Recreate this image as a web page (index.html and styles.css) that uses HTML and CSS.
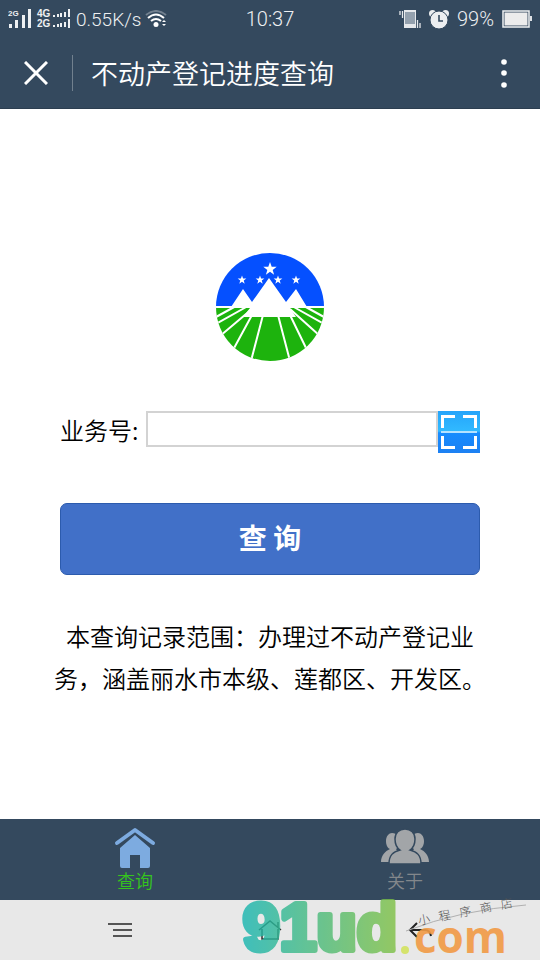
FILE: index.html
```html
<!DOCTYPE html>
<html lang="zh-CN">
<head>
  <meta charset="UTF-8">
  <meta name="viewport" content="width=device-width, initial-scale=1">
  <title>不动产登记进度查询</title>
  <link rel="stylesheet" href="styles.css">
</head>
<body>
  <div class="status-bar">
    <div class="status-left">
      <svg class="signal" width="64" height="20" viewBox="0 0 64 20">
        <g fill="#eef0f2">
          <text x="0" y="7" font-size="8">2G</text>
          <path d="M1 15h3v4h-3zM7 11h3v8h-3zM14 6h3v13h-3zM20 0h3v19h-3z"/>
          <text x="29" y="8" font-size="10">4G</text>
          <text x="29" y="18" font-size="10">2G</text>
          <path d="M45 6h2v2h-2zM49 5h2v3h-2zM52 4h2v4h-2zM56 3h2v5h-2zM60 0h2v8h-2zM45 16h2v2h-2zM49 15h2v3h-2zM52 14h2v4h-2zM56 13h2v5h-2zM60 10h2v9h-2z"/>
        </g>
      </svg>
      <span class="speed">0.55K/s</span>
      <svg width="22" height="18" viewBox="0 0 22 18" fill="none" stroke="#fff" stroke-width="2">
        <path d="M1 5Q11-3 21 5" stroke="#72808f"/>
        <path d="M3 8Q11 1 19 8M6 11Q11 7 16 11"/>
        <circle cx="11" cy="14.500" r="2.500" fill="#fff" stroke="none"/>
        <path d="M17 12l2-2 2 2zM17 14l2 2 2-2z" fill="#fff" stroke="none"/>
      </svg>
    </div>
    <span>10:37</span>
    <div class="status-right">
      <svg class="vibrate" width="22" height="19" viewBox="0 0 22 19">
        <path d="M5 0h12v18H5z" fill="#e6e9ec"/>
        <path d="M6 2h10v12H6z" fill="#94a1ae"/>
        <path d="M1 1v4M3.500 1v7M18.500 10v8M21 13v5" stroke="#e6e9ec" stroke-width="1.300"/>
      </svg>
      <svg class="alarm" width="20" height="19" viewBox="0 0 20 19">
        <circle cx="3.500" cy="3.500" r="3.500" fill="#eceef0"/>
        <circle cx="16.500" cy="3.500" r="3.500" fill="#eceef0"/>
        <circle cx="10" cy="10" r="9" fill="#eceef0" stroke="#34495e"/>
        <path d="M10 5v6h4" fill="none" stroke="#34495e" stroke-width="1.600"/>
      </svg>
      <span class="percent">99%</span>
      <svg width="30" height="18" viewBox="0 0 30 18">
        <path d="M1 1h26v16H1z" fill="none" stroke="#f0f2f4" stroke-width="1.500"/>
        <path d="M2.500 2.500h23v13h-23z" fill="#ececec"/>
        <path d="M28 6h2v5h-2z" fill="#dde1e5"/>
      </svg>
    </div>
  </div>

  <header class="title-bar">
    <button type="button" class="icon-btn" aria-label="关闭">
      <svg width="24" height="24" viewBox="0 0 24 24" stroke="#fff" stroke-width="3">
        <path d="M1 1l22 22M23 1L1 23"/>
      </svg>
    </button>
    <h1>不动产登记进度查询</h1>
    <button type="button" class="icon-btn" aria-label="更多">
      <svg width="6" height="30" viewBox="0 0 6 30" fill="#fff">
        <circle cx="3" cy="4" r="2.800"/><circle cx="3" cy="15" r="2.800"/><circle cx="3" cy="27" r="2.800"/>
      </svg>
    </button>
  </header>

  <main>
    <svg class="logo" width="108" height="108" viewBox="0 0 108 108">
      <defs>
        <clipPath id="disc"><circle cx="54" cy="54" r="54"/></clipPath>
        <path id="star" d="M0-7L1.700-2.200 6.700-2.200 2.700.9 4.100 5.700 0 2.800-4.100 5.700-2.700.9-6.700-2.200-1.700-2.200z"/>
      </defs>
      <g clip-path="url(#disc)">
        <path fill="#0550ff" d="M0 0h108v54H0z"/>
        <path fill="#1db30d" d="M0 54h108v54H0z"/>
        <path d="M0 54h108M32 53L0 71M20 53L0 64M36 56L4 83M36 62L17 97M47 62L35 108M62 62L74 108M74 62L91 97M74 56L104 83M76 53L108 71M88 53L108 64" stroke="#fff" stroke-width="2" fill="none"/>
        <path fill="#fff" d="M15 54L27 36 36 49 53 25 70 49 80 36 91 54 74 55 80 64 27 64 34 55z"/>
      </g>
      <g fill="#fff">
        <use href="#star" x="54" y="16"/>
        <use href="#star" transform="translate(26 27) scale(.65)"/>
        <use href="#star" transform="translate(44 27) scale(.65)"/>
        <use href="#star" transform="translate(62 27) scale(.65)"/>
        <use href="#star" transform="translate(80 27) scale(.65)"/>
      </g>
    </svg>

    <form class="query-form">
      <div class="field">
        <label for="bizNo">业务号:</label>
        <input type="text" id="bizNo">
        <button type="button" class="scan-btn" aria-label="扫一扫">
          <svg width="42" height="42" viewBox="0 0 42 42" fill="none" stroke="#fff" stroke-width="3">
            <path d="M4.500 17V5.500H17M25 5.500h12.500V17M4.500 25v11.500H17M25 36.500h12.500V25"/>
            <path d="M3 21h36" stroke="#b5e2ff" stroke-width="2"/>
          </svg>
        </button>
      </div>
      <button type="button" class="submit-btn">查 询</button>
    </form>

    <p class="scope">本查询记录范围：办理过不动产登记业<br>务，涵盖丽水市本级、莲都区、开发区。</p>
  </main>

  <nav class="tab-bar">
    <a href="#query" class="tab active">
      <svg width="42" height="42" viewBox="0 0 42 42">
        <path d="M6 21L21 8l15 13v18q0 2-2 2H26V28H16v13H8q-2 0-2-2z" fill="#7dabe0"/>
        <path d="M3 17L21 3l18 14" fill="none" stroke="#34495e" stroke-width="7"/>
        <path d="M3 16L21 3l18 13" fill="none" stroke="#7dabe0" stroke-width="4" stroke-linecap="round" stroke-linejoin="round"/>
      </svg>
      <span>查询</span>
    </a>
    <a href="#about" class="tab">
      <svg width="50" height="42" viewBox="0 0 50 42" fill="#a2a5a8">
        <path id="side" d="M12 6c5 0 8 4 8 9 0 3-2 6-4 7l2 3-7 10H1C1 29 5 24 10 22 7 21 6 17 6 14 6 9 9 6 12 6z"/>
        <use href="#side" transform="matrix(-1 0 0 1 50 0)"/>
        <path d="M9 37c0-9 4-12 11-14-3-2-5-6-5-11 0-6 4-10 10-10s10 4 10 10c0 5-2 9-5 11 7 2 11 5 11 14z" stroke="#34495e" stroke-width="1.500"/>
      </svg>
      <span>关于</span>
    </a>
  </nav>

  <div class="system-nav">
    <button type="button" class="icon-btn" aria-label="菜单">
      <svg width="24" height="16" viewBox="0 0 24 16" stroke="#555" stroke-width="2">
        <path d="M0 2h24M5 8h19M5 14h19"/>
      </svg>
    </button>
    <button type="button" class="icon-btn" aria-label="主页">
      <svg width="24" height="22" viewBox="0 0 24 22" fill="none" stroke="#333" stroke-width="1.500">
        <path d="M1 11L12 2l11 9M4 10v10h16V10M20 8V3"/>
      </svg>
    </button>
    <button type="button" class="icon-btn" aria-label="返回">
      <svg width="24" height="16" viewBox="0 0 24 16" fill="none" stroke="#222" stroke-width="2">
        <path d="M9 1L2 8l7 7M2 8h15q5 0 6 6"/>
      </svg>
    </button>
    <svg class="watermark" width="290" height="75" viewBox="0 0 290 75">
      <defs>
        <linearGradient id="brand" gradientUnits="userSpaceOnUse" x1="0" y1="0" x2="154" y2="0">
          <stop offset="0" stop-color="#14b5b2"/>
          <stop offset="1" stop-color="#7dc044"/>
        </linearGradient>
      </defs>
      <text class="brand" x="3" y="65">91ud</text>
      <circle cx="165" cy="65" r="4" fill="#d5e36c"/>
      <text class="com" x="174" y="68">com</text>
      <path d="M166 46Q220 25 286 20" fill="none" stroke="#b0b0b0"/>
      <text class="shop" transform="translate(179 40) rotate(-11)">小程序商店</text>
    </svg>
  </div>
</body>
</html>
```
FILE: styles.css
```css
* {
  box-sizing: border-box;
}
body {
  margin: 0;
  min-height: 100vh;
  display: flex;
  flex-direction: column;
  background: #fff;
  color: #000;
  font-family: "Noto Sans CJK SC", sans-serif;
  font-weight: 350;
}
svg {
  display: block;
}
button {
  padding: 0;
  border: none;
  background: none;
  font-family: inherit;
  cursor: pointer;
}
.status-bar {
  height: 38px;
  padding: 0 8px;
  display: grid;
  grid-template-columns: 1fr auto 1fr;
  align-items: center;
  background: #34495e;
  color: #eef0f2;
  font-family: Roboto, sans-serif;
  font-size: 20px;
  font-weight: 350;
}
.status-left,
.status-right {
  display: flex;
  align-items: center;
  gap: 4px;
}
.status-right {
  justify-content: flex-end;
  gap: 8px;
}
.speed {
  font-size: 19px;
}
.signal text {
  font-family: "Liberation Sans", sans-serif;
  font-weight: bold;
}
.title-bar {
  height: 71px;
  padding: 0 33px 0 24px;
  display: flex;
  align-items: center;
  background: #34495e;
  border-bottom: 1px solid #2c3e50;
}
.title-bar h1 {
  flex: 1;
  margin: 0 0 0 24px;
  padding-left: 18px;
  border-left: 1px solid #71808e;
  color: #fff;
  font-size: 27px;
  font-weight: 350;
  line-height: 36px;
}
main {
  flex: 1;
  padding: 144px 48px 48px;
}
.logo {
  margin: 0 auto;
}
.query-form {
  margin: 50px 12px 0;
}
.field {
  display: flex;
  align-items: flex-start;
}
.field label {
  margin-right: 8px;
  font-size: 24px;
  line-height: 38px;
}
.field input {
  flex: 1;
  min-width: 0;
  height: 36px;
  padding: 0 8px;
  border: 2px solid #d3d3d3;
  border-radius: 0;
  background: #fff;
  font-size: 20px;
}
.scan-btn {
  background: linear-gradient(#25a4fa, #31baff 48%, #178cff 52%, #1c80f2);
}
.submit-btn {
  display: block;
  width: 100%;
  height: 72px;
  margin-top: 50px;
  padding-bottom: 4px;
  border: 1px solid #2c5bad;
  border-radius: 7px;
  background: #4170c8;
  color: #fff;
  font-size: 28px;
  font-weight: bold;
}
.scope {
  margin: 40px 0 0;
  font-size: 24px;
  line-height: 42px;
  text-align: center;
  white-space: nowrap;
}
.tab-bar {
  height: 81px;
  display: flex;
  background: #34495e;
}
.tab {
  flex: 1;
  display: flex;
  flex-direction: column;
  align-items: center;
  padding-top: 8px;
  color: #83878b;
  font-size: 18px;
  line-height: 22px;
  text-decoration: none;
}
.tab.active {
  color: #35c51c;
}
.system-nav {
  position: relative;
  height: 60px;
  padding: 0 45px;
  display: grid;
  grid-template-columns: repeat(3, 1fr);
  justify-items: center;
  align-items: center;
  background: #e8e8e8;
}
.watermark {
  position: absolute;
  right: 10px;
  bottom: 0;
  overflow: visible;
  pointer-events: none;
}
.brand {
  font: bold 66px "Liberation Sans", sans-serif;
  fill: url(#brand);
  stroke: url(#brand);
  stroke-width: 6px;
  stroke-linejoin: round;
  opacity: 0.8;
}
.com {
  font: bold 44px "Open Sans", sans-serif;
  fill: #f19a45;
  opacity: 0.9;
}
.shop {
  font: 300 12px "Noto Sans CJK SC", sans-serif;
  letter-spacing: 9px;
  fill: #555;
}
```
